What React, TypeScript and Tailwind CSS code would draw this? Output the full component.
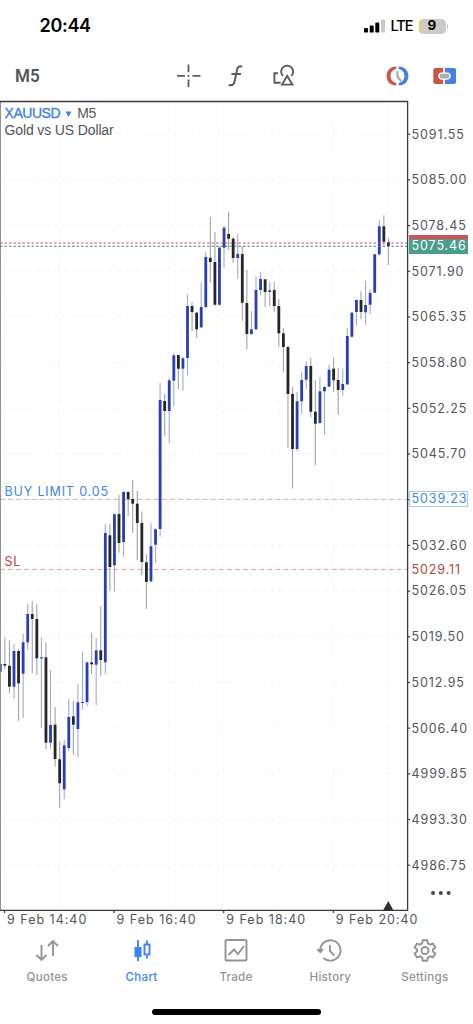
type Candle = [high: number, top: number, bottom: number, low: number, up: 0 | 1];

// M5 candles, oldest first
const candles: Candle[] = [
    [664, 664, 671.7, 671.7, 1],
    [637.7, 664, 665.7, 669, 0],
    [640.7, 665.7, 686.7, 692.7, 0],
    [644, 651, 686.7, 698.7, 1],
    [649, 651, 683.3, 721.3, 0],
    [633.7, 642.3, 673.7, 718, 1],
    [603.7, 614, 642.3, 650.3, 1],
    [601.3, 614, 619, 673.3, 0],
    [604.3, 619, 658.3, 674.7, 0],
    [637.7, 657.3, 658.5, 728, 1],
    [642.3, 657.3, 742.7, 749, 0],
    [670, 725, 742.7, 748.7, 1],
    [707, 724.7, 759, 766.7, 0],
    [741.3, 759.3, 783.3, 807.7, 0],
    [739.7, 745.3, 789.3, 799, 1],
    [699.3, 717, 748, 751.3, 1],
    [700.7, 716.3, 724.7, 754.7, 0],
    [683.7, 702.3, 729, 757.3, 1],
    [652, 702, 703, 709.7, 1],
    [661.7, 662.3, 702, 706.3, 1],
    [633, 662.3, 664.3, 674, 0],
    [638, 650.3, 664.7, 705.3, 1],
    [606.3, 650.3, 660, 676, 0],
    [524, 533, 662.3, 673.7, 1],
    [523.7, 535.3, 567, 590.7, 0],
    [513.3, 514.3, 565.3, 591.3, 1],
    [494.7, 514, 543, 552.7, 0],
    [491, 492, 542, 557, 1],
    [491, 492, 499.3, 515.7, 0],
    [480, 499, 503.7, 532.7, 0],
    [491, 503.7, 523, 560, 0],
    [511.3, 523, 562, 575, 0],
    [554, 562.3, 582, 609, 0],
    [523.3, 546.3, 581.3, 582.7, 1],
    [528.3, 529.3, 544.7, 563, 1],
    [383, 400, 529, 536.7, 1],
    [394, 401, 411, 436, 0],
    [378, 380.3, 411, 443.3, 1],
    [352.7, 355.3, 380.7, 406.3, 1],
    [355, 355, 368.7, 389.3, 0],
    [357, 358.3, 368.7, 390.7, 1],
    [294.3, 306, 358, 375, 1],
    [302, 306, 312, 331.3, 0],
    [312, 312.7, 329.3, 337.7, 0],
    [282.3, 307, 327.3, 328, 1],
    [252, 257, 307, 308.3, 1],
    [216.7, 257.7, 262, 282.7, 0],
    [232, 262, 304.7, 305.7, 0],
    [246.3, 247.7, 304.7, 305.7, 1],
    [226.3, 227.7, 247.7, 268.3, 1],
    [211.7, 234, 238.7, 249.7, 0],
    [237, 238.7, 258, 263, 0],
    [234, 254, 258, 279, 1],
    [246.3, 254, 302.7, 320.7, 0],
    [269.7, 303, 334, 349.3, 0],
    [311, 329.3, 334, 334.7, 1],
    [276.3, 290, 329.3, 330, 1],
    [272, 279, 290, 295.3, 1],
    [279, 279.3, 292, 307, 0],
    [282.3, 290.3, 292, 306, 1],
    [282, 290, 306, 312, 0],
    [299, 306, 333.3, 346.7, 0],
    [328, 333.3, 347, 371.7, 0],
    [346, 347, 394, 447.7, 0],
    [387, 394, 449, 488.7, 0],
    [392, 401.3, 449, 451.3, 1],
    [371.7, 380, 401.3, 414, 1],
    [361.3, 366, 379.7, 389, 1],
    [358, 366, 411.7, 417.3, 0],
    [380.3, 411.7, 423.7, 465.3, 0],
    [377.3, 391.3, 423, 423.7, 1],
    [386, 387, 391.3, 434.7, 1],
    [365, 369.7, 386.7, 387, 1],
    [358, 368.7, 380.3, 391.7, 0],
    [368, 380, 390, 414.7, 0],
    [369, 384, 390, 395.7, 1],
    [328, 336, 384.3, 385, 1],
    [311.7, 312.7, 336.7, 337.7, 1],
    [299.5, 300, 312, 325.7, 1],
    [291.3, 300, 312, 319.3, 0],
    [281, 305, 312.3, 325, 1],
    [289, 293, 304.7, 314.3, 1],
    [254, 254.3, 292.7, 293, 1],
    [219.7, 226.3, 254.3, 255.3, 1],
    [215.3, 226.3, 241.7, 245, 0],
    [238.3, 242, 246, 265, 0],
];

const prices = [
    "5091.55", "5085.00", "5078.45", "5071.90", "5065.35", "5058.80",
    "5052.25", "5045.70", "", "5032.60", "5026.05", "5019.50",
    "5012.95", "5006.40", "4999.85", "4993.30", "4986.75",
];

const times = ["9 Feb 14:40", "9 Feb 16:40", "9 Feb 18:40", "9 Feb 20:40"];

const STEP = 4.566;
const ROW = 45.69;

function StatusBar() {
    return (
        <div className="flex h-[52px] items-center justify-between pl-[39.5px] pr-[25px] font-['Inter',sans-serif]">
            <span className="text-[18px] font-semibold leading-none tracking-[-0.3px] text-black">20:44</span>
            <div className="flex items-center">
                <svg width="22" height="14" viewBox="0 0 22 14">
                    <rect x="0" y="9" width="4" height="4.6" rx="1.2" />
                    <rect x="5.7" y="6.6" width="4" height="7" rx="1.2" />
                    <rect x="11.3" y="3.6" width="4" height="10" rx="1.2" />
                    <rect x="17" y="0.4" width="4" height="13.2" rx="1.2" fill="#c8c8c8" />
                </svg>
                <span className="ml-[5px] w-[22px] text-[14.5px] font-medium leading-none tracking-[-1px] text-black">
                    LTE
                </span>
                <div className="relative ml-[6px] flex h-[15px] w-[27px] items-center justify-center overflow-hidden rounded-[4.5px] bg-[#cbcbcb] text-[13.5px] font-bold leading-none text-black">
                    <div className="absolute inset-y-0 left-0 w-[2px] bg-[#f5cf45]" />
                    9
                </div>
                <div className="ml-px h-[5px] w-[1.5px] rounded-r-full bg-[#c4c4c4]" />
            </div>
        </div>
    );
}

function Toolbar() {
    return (
        <div className="flex h-12 items-center pl-[15px] pr-4">
            <div className="w-[160.5px]">
                <span className="inline-block origin-left scale-x-90 font-['Roboto',sans-serif] text-[19px] font-semibold leading-none text-[#555]">
                    M5
                </span>
            </div>
            <svg width="25" height="24" viewBox="0 0 25 24" stroke="#5c5c5c" strokeWidth="1.8" fill="none">
                <path d="M12.5 .5v7.5M12.5 15.5V23M1 11.8h8M16.5 11.8h8M11.6 11.8h1.8" />
            </svg>
            <svg className="ml-[26px]" width="18" height="24" viewBox="0 0 18 24" stroke="#5c5c5c" strokeWidth="2" fill="none">
                <path d="M15.3 2.6c-3-1.2-4.7.3-5.3 3.3L7.7 17c-.7 3.5-2.4 5-6 4M4.4 10h9.6" />
            </svg>
            <svg className="ml-[27px]" width="24" height="24" viewBox="0 0 24 24" stroke="#5c5c5c" strokeWidth="1.9" fill="none">
                <path d="M6 9.2H2.4v9.5h6.2M11 12a6 6 0 1 1 8.3 0M15.2 11.9L10 20.6h10.4z" />
            </svg>
            <svg className="ml-auto" width="25" height="22" viewBox="0 0 25 22">
                <path d="M11.3 1.5C5 1.5 1.6 6 1.6 11s3.4 9.5 9.7 9.5v-2.6C7.5 17.2 5.6 14.5 5.6 11s1.9-6.2 5.7-6.9z" fill="#cb5547" />
                <path d="M13.6 1.5C20 1.5 23.4 6 23.4 11s-3.4 9.5-9.8 9.5v-2.6c3.9-.7 5.8-3.4 5.8-6.9s-1.9-6.2-5.8-6.9z" fill="#4680e4" />
                <path d="M12.4 6.8v5l3.2 3.6" stroke="#99aaa7" strokeWidth="2" fill="none" strokeLinecap="round" />
            </svg>
            <svg className="ml-[22px]" width="25" height="18" viewBox="0 0 25 18">
                <path d="M3.3 1h8v4.5H9a3.7 3.7 0 0 0 0 7.2h2.3V17h-8a2 2 0 0 1-2-2V3a2 2 0 0 1 2-2z" fill="#cb5547" />
                <path d="M13 1h9a2 2 0 0 1 2 2v12a2 2 0 0 1-2 2h-9v-4.3h3a3.7 3.7 0 0 0 0-7.2h-3z" fill="#4680e4" />
                <rect x="7.5" y="6.8" width="10" height="4.6" rx="2.3" fill="#aaaeb5" />
            </svg>
        </div>
    );
}

function CandleChart() {
    const width = 407.5;
    return (
        <svg className="block" width="411" height="814" viewBox="0 100 411 814">
            <g stroke="#f6f6f8" strokeDasharray="5 4">
                {prices.map((_, i) => (
                    <path key={i} d={`M0 ${134 + i * ROW}H${width}`} />
                ))}
                {Array.from({ length: 8 }).map((_, i) => (
                    <path key={i} d={`M${4.5 + i * 54.8} 102V910`} />
                ))}
            </g>
            <path d="M0 499.4H408" stroke="#b4bccb" strokeDasharray="4.8 3.3" />
            <path d="M0 569.4H408" stroke="#e0a29e" strokeDasharray="4.8 3.3" />
            {candles.map(([high, top, bottom, low, up], i) => {
                const x = 0.3 + i * STEP;
                return (
                    <g key={i}>
                        <path d={`M${x} ${high}V${low}`} stroke={up ? "#a0abdc" : "#a3a3a3"} strokeWidth="1.1" />
                        <rect x={x - 1.4} y={top} width="2.8" height={bottom - top} fill={up ? "#263fb8" : "#262626"} />
                    </g>
                );
            })}
            <path d="M0 243H408" stroke="#d4525a" strokeWidth="1.1" strokeDasharray="2.6 1.9" />
            <path d="M0 246.3H408" stroke="#47877d" strokeWidth="1.1" strokeDasharray="2.6 1.9" />
            <path d="M.3 101V910" stroke="#777" />
            <path d="M0 101.5H407.6V910.4H0" stroke="#3b3b42" strokeWidth="1.3" fill="none" />
            <g stroke="#3b3b42" strokeWidth="1.2">
                {prices.map((_, i) => (
                    <path key={i} d={`M407.6 ${134.2 + i * ROW}h2.6`} />
                ))}
                {times.map((t, i) => (
                    <path key={t} d={`M${4.5 + i * 109.6} 910v3`} />
                ))}
            </g>
            <path d="M388.3 901L393.5 910.5H383z" fill="#2f2f2f" />
        </svg>
    );
}

function PriceAxis() {
    return (
        <div className="relative w-[62px] text-[12.5px] tracking-[0.9px] text-[#55555c]">
            <div className="flex flex-col pt-[12px] pl-[0.5px]">
                {prices.map((price, i) => (
                    <div key={i} className="flex h-[45.69px] shrink-0 items-center leading-none">
                        {price}
                    </div>
                ))}
            </div>
            <div className="absolute -left-0.5 top-[135px] h-[19px] w-[59px] bg-[#cf5356]" />
            <div className="absolute -left-0.5 top-[138.5px] flex h-[15.5px] w-[59px] items-center bg-[#4a9c8d] pl-[2.5px] leading-none text-white">
                5075.46
            </div>
            <div className="absolute -left-[2px] top-[391px] flex h-[16px] w-[58.5px] items-center border border-[#a9c8f8] bg-white pl-[1.5px] leading-none text-[#4385ee]">
                5039.23
            </div>
            <div className="absolute left-[0.5px] top-[463.5px] leading-none text-[#bd4338]">5029.11</div>
        </div>
    );
}

function ChartPanel() {
    return (
        <div className="relative flex h-[814px] font-['Inter',sans-serif]">
            <CandleChart />
            <PriceAxis />
            <div className="absolute left-[4.5px] top-[5px] font-['Liberation_Sans',sans-serif] text-[14px] leading-[17px] tracking-[-0.13px] text-[#55555c]">
                <div className="flex items-center">
                    <span className="tracking-[-0.45px] text-[#3e80f0] [-webkit-text-stroke:0.35px_#3e80f0]">XAUUSD</span>
                    <svg className="mx-[5px] mt-[1px]" width="7" height="6" viewBox="0 0 7 6">
                        <path d="M.5.5h6L3.5 6z" fill="#3e80f0" />
                    </svg>
                    <span className="tracking-[-0.3px]">M5</span>
                </div>
                <div>Gold vs US Dollar</div>
            </div>
            <div className="absolute left-[4.5px] top-[385.5px] text-[12.5px] leading-none tracking-[0.85px] text-[#4385ee]">
                BUY LIMIT 0.05
            </div>
            <div className="absolute left-[4.5px] top-[456px] text-[12.5px] leading-none tracking-[0.7px] text-[#bd4338]">
                SL
            </div>
            <svg className="absolute left-[430px] top-[790px]" width="22" height="6" viewBox="0 0 22 6" fill="#48484c">
                <circle cx="3" cy="3" r="2" />
                <circle cx="10.8" cy="3" r="2" />
                <circle cx="18.6" cy="3" r="2" />
            </svg>
        </div>
    );
}

function TimeAxis() {
    return (
        <div className="flex h-[18px] pl-[7px] font-['Inter',sans-serif] text-[12.5px] leading-[12px] tracking-[1px] text-[#55555c]">
            {times.map((time) => (
                <span key={time} className="w-[109.6px] shrink-0 whitespace-nowrap">
                    {time}
                </span>
            ))}
        </div>
    );
}

const tabs = [
    {
        name: "Quotes",
        icon: <path d="M6.5 6v15M1.5 16l5 5 5-5M18 17V2M13 7l5-5 5 5" />,
    },
    {
        name: "Chart",
        icon: (
            <>
                <path d="M8 1v21" />
                <rect x="5" y="8.5" width="6" height="9" fill="currentColor" strokeWidth="1" />
                <path d="M17 1.5V5M17 16.5v3" />
                <rect x="14.5" y="5.5" width="5" height="10" />
            </>
        ),
    },
    {
        name: "Trade",
        icon: (
            <>
                <rect x="1.5" y="1" width="21" height="20.5" rx="1" />
                <path d="M4.5 16L10 10.5l4 4.5 6-8" />
            </>
        ),
    },
    {
        name: "History",
        icon: (
            <>
                <path d="M2.2 12.5A10.2 10.2 0 1 1 5.5 19M-.7 10.2l3 2.8 2.7-3.2" />
                <path d="M12 6v6.2l4.3 4.3" />
            </>
        ),
    },
    {
        name: "Settings",
        icon: (
            <>
                <path d="M9.8 1.2h4.4l.6 3.2 2.3 1.3 3-1.1 2.3 3.9-2.5 2v2l2.5 2-2.3 3.9-3-1.1-2.3 1.3-.6 3.2H9.8l-.6-3.2-2.3-1.3-3 1.1-2.3-3.9 2.5-2v-2l-2.5-2 2.3-3.9 3 1.1 2.3-1.3z" />
                <circle cx="12" cy="11.5" r="3.5" />
            </>
        ),
    },
];

function TabBar() {
    return (
        <div className="grid h-[92px] w-[472px] grid-cols-5 pt-[7px] font-['Inter',sans-serif]">
            {tabs.map(({ name, icon }) => (
                <div
                    key={name}
                    className={`flex flex-col items-center gap-[9.5px] ${name === "Chart" ? "text-[#3c82f6]" : "text-[#949494]"}`}
                >
                    <svg
                        className="overflow-visible"
                        width="24"
                        height="23"
                        viewBox="0 0 24 23"
                        fill="none"
                        stroke="currentColor"
                        strokeWidth="1.9"
                    >
                        {icon}
                    </svg>
                    <span className="text-[11.6px] font-medium leading-none tracking-[0.25px]">{name}</span>
                </div>
            ))}
        </div>
    );
}

export default function App() {
    return (
        <div className="flex h-[1024px] w-[473px] flex-col overflow-hidden bg-white">
            <StatusBar />
            <Toolbar />
            <ChartPanel />
            <TimeAxis />
            {/* Tabs and home indicator */}
            <div className="flex h-[92px] flex-col">
                <TabBar />
                <div className="-mt-[15.5px] h-[6px] w-[169px] shrink-0 self-center rounded-full bg-black" />
            </div>
        </div>
    );
}
